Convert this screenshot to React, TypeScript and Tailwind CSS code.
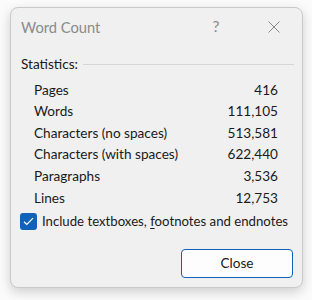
import React, { useState } from 'react';

const stats = [
  { label: 'Pages', value: '416' },
  { label: 'Words', value: '111,105' },
  { label: 'Characters (no spaces)', value: '513,581' },
  { label: 'Characters (with spaces)', value: '622,440' },
  { label: 'Paragraphs', value: '3,536' },
  { label: 'Lines', value: '12,753' },
];

const App: React.FC = () => {
  const [includeExtras, setIncludeExtras] = useState(true);

  return (
    <div
      className="w-[312px] h-[300px] bg-[#fbfbfb] pl-[10px] pt-[7px]"
      style={{ fontFamily: 'Lato, "Noto Sans", sans-serif' }}
    >
      {/* Dialog */}
      <div className="w-[293px] h-[281px] bg-[#f0f0f0] border border-[#c9c9c9] rounded-[8px] shadow-[0_4px_12px_rgba(0,0,0,0.18)] flex flex-col">
        {/* Title bar */}
        <div className="h-[38px] flex items-center pl-[10px] text-[14.7px] text-[#8a8a8a]">
          <span className="flex-1">Word Count</span>
          <span className="w-[46px] mr-[12px] text-center text-[15.5px]">?</span>
          <span className="w-[46px] flex justify-center mr-[5px]">
            <svg width="12" height="12" viewBox="0 0 12 12" fill="none" stroke="#8a8a8a" strokeWidth="1">
              <path d="M0.5 0.5 L11.5 11.5 M11.5 0.5 L0.5 11.5" />
            </svg>
          </span>
        </div>

        {/* Statistics header */}
        <div className="mt-[8px] h-[20px] flex items-center pl-[10px] pr-[8px] text-[13.6px] text-[#1a1a1a]">
          <span>Statistics:</span>
          <div className="flex-1 h-px bg-[#d6d6d6] ml-[5px]" />
        </div>

        {/* Stat rows */}
        <div className="mt-[5px] pl-[23px] pr-[24px] text-[13.6px] text-[#1a1a1a]">
          {stats.map((s) => (
            <div key={s.label} className="h-[21.6px] flex items-center justify-between">
              <span>{s.label}</span>
              <span>{s.value}</span>
            </div>
          ))}
        </div>

        {/* Checkbox */}
        <label className="mt-[3px] ml-[9px] flex items-center gap-[5px] text-[13.2px] text-[#1a1a1a] cursor-pointer whitespace-nowrap">
          <input
            type="checkbox"
            className="hidden"
            checked={includeExtras}
            onChange={(e) => setIncludeExtras(e.target.checked)}
          />
          <span className="w-[17px] h-[17px] shrink-0 rounded-[3px] bg-[#0f62b8] flex items-center justify-center">
            {includeExtras && (
              <svg width="11" height="9" viewBox="0 0 11 9" fill="none" stroke="white" strokeWidth="1.2">
                <path d="M1 4.8 L3.8 7.5 L10 1.2" />
              </svg>
            )}
          </span>
          <span>
            Include textboxes, <span className="underline underline-offset-2">f</span>ootnotes and endnotes
          </span>
        </label>

        {/* Footer */}
        <div className="mt-auto mb-[9px] mr-[9px] flex justify-end">
          <button className="w-[112px] h-[29px] rounded-[4px] border border-[#0f62b8] bg-[#fdfdfd] text-[13.6px] text-[#1a1a1a]">
            Close
          </button>
        </div>
      </div>
    </div>
  );
};

export default App;
